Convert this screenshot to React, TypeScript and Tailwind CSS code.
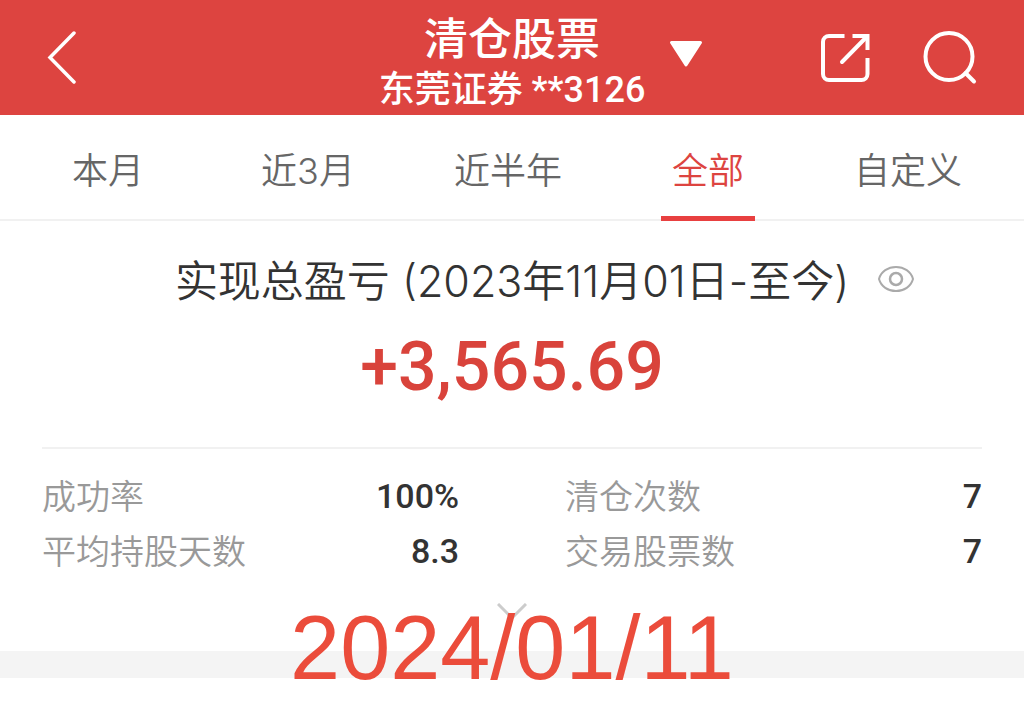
import { useState } from "react";

const tabs = ["本月", "近3月", "近半年", "全部", "自定义"];

const stats = [
  { label: "成功率", value: "100%" },
  { label: "清仓次数", value: "7" },
  { label: "平均持股天数", value: "8.3" },
  { label: "交易股票数", value: "7" },
];

const BackIcon = () => (
  <svg width="30" height="54" viewBox="0 0 30 54" fill="none" stroke="currentColor" strokeWidth="3.500" strokeLinecap="round">
    <path d="M27 2L3 26.500L27 51" />
  </svg>
);

const ShareIcon = () => (
  <svg width="50" height="50" viewBox="0 0 50 50" fill="none" stroke="currentColor" strokeWidth="4">
    <path d="M24.500 3H9a6 6 0 0 0-6 6v32a6 6 0 0 0 6 6h32.500a6 6 0 0 0 6-6V25" />
    <path d="M32.500 3H47.500V17" />
    <path d="M47 3.500L22 29" strokeLinecap="round" />
  </svg>
);

const SearchIcon = () => (
  <svg width="54" height="54" viewBox="0 0 54 54" fill="none" stroke="currentColor" strokeWidth="4">
    <circle cx="26" cy="25.500" r="23.500" />
    <path d="M42.500 42L51 50.500" strokeLinecap="round" />
  </svg>
);

const EyeIcon = () => (
  <svg width="38" height="28" viewBox="0 0 38 28" fill="none" stroke="currentColor" strokeWidth="2">
    <path d="M2 14C4 6.500 11 2 19 2s15 4.500 17 12c-2 7.500-9 12-17 12S4 21.500 2 14z" />
    <circle cx="19" cy="14" r="6" strokeWidth="2.500" />
  </svg>
);

const Header = () => (
  <header className="grid grid-cols-[1fr_auto_1fr] bg-[#dd4440] text-white">
    <div className="flex items-center pl-[47px]">
      <button type="button" aria-label="返回">
        <BackIcon />
      </button>
    </div>
    <div className="text-center pt-[15px] font-['Roboto','Noto_Sans_CJK_SC',sans-serif] font-medium">
      <h1 className="text-[44px] leading-[50px]">清仓股票</h1>
      <p className="text-[36px] leading-[50px]">东莞证券 **3126</p>
    </div>
    <div className="flex items-center pl-6 pr-[47px]">
      <button type="button" aria-label="切换账户" className="mr-auto pb-2">
        <svg width="34" height="28" viewBox="0 0 34 28" fill="currentColor" stroke="currentColor" strokeWidth="3" strokeLinejoin="round">
          <path d="M2.500 2.500H31.500L17 25z" />
        </svg>
      </button>
      <button type="button" aria-label="分享" className="mr-[53px]">
        <ShareIcon />
      </button>
      <button type="button" aria-label="搜索">
        <SearchIcon />
      </button>
    </div>
  </header>
);

export default function App() {
  const [active, setActive] = useState("全部");
  const [hidden, setHidden] = useState(false);

  return (
    <div className="min-h-screen bg-white font-['Inter','Noto_Sans_CJK_SC',sans-serif]">
      <Header />

      <nav className="grid grid-cols-5 pl-2 pr-4 border-b-2 border-[#f1f1f1]">
        {tabs.map((tab) => (
          <button
            key={tab}
            type="button"
            onClick={() => setActive(tab)}
            className={`relative pt-2 text-[36px] leading-[96px] font-[350] ${
              tab === active ? "text-[#dd4440]" : "text-[#666666]"
            }`}
          >
            {tab}
            {tab === active && (
              <span className="absolute -bottom-[2px] left-1/2 -translate-x-1/2 w-[94px] h-[5px] bg-[#e84040]" />
            )}
          </button>
        ))}
      </nav>

      <main className="relative">
        <div className="px-[42px]">
          <section className="pt-7 pb-[26px] border-b-2 border-[#f1f1f1]">
            <div className="grid grid-cols-[1fr_auto_1fr] items-center">
              <h2 className="col-start-2 text-[43px] leading-[64px] text-[#333333] font-[350]">
                实现总盈亏 (2023年11月01日-至今)
              </h2>
              <button type="button" aria-label="隐藏金额" onClick={() => setHidden(!hidden)} className="pl-7 pb-1 text-[#aaaaaa]">
                <EyeIcon />
              </button>
            </div>
            <p className="text-center text-[68px] leading-[108px] font-medium text-[#d9433b] font-['Roboto',sans-serif]">
              {hidden ? "****" : "+3,565.69"}
            </p>
          </section>

          <dl className="grid grid-cols-2 gap-x-[106px] pt-5">
            {stats.map(({ label, value }) => (
              <div key={label} className="flex justify-between text-[34px] leading-[55px]">
                <dt className="text-[#999999] font-[350]">{label}</dt>
                <dd className="text-[#333333] font-medium font-['Roboto',sans-serif]">{value}</dd>
              </div>
            ))}
          </dl>
        </div>

        <button type="button" aria-label="展开更多" className="block mx-auto mt-6 mb-[30px] text-[#cccccc]">
          <svg width="30" height="18" viewBox="0 0 30 18" fill="none" stroke="currentColor" strokeWidth="3">
            <path d="M1 1L15 15L29 1" />
          </svg>
        </button>
        <div className="h-[27px] bg-[#f4f4f4]" />

        <time
          dateTime="2024-01-11"
          className="absolute -bottom-[22px] left-1/2 -translate-x-1/2 text-[90px] leading-[104px] text-[#eb4c3b] font-['Liberation_Sans',sans-serif]"
        >
          2024/01/11
        </time>
      </main>
    </div>
  );
}
